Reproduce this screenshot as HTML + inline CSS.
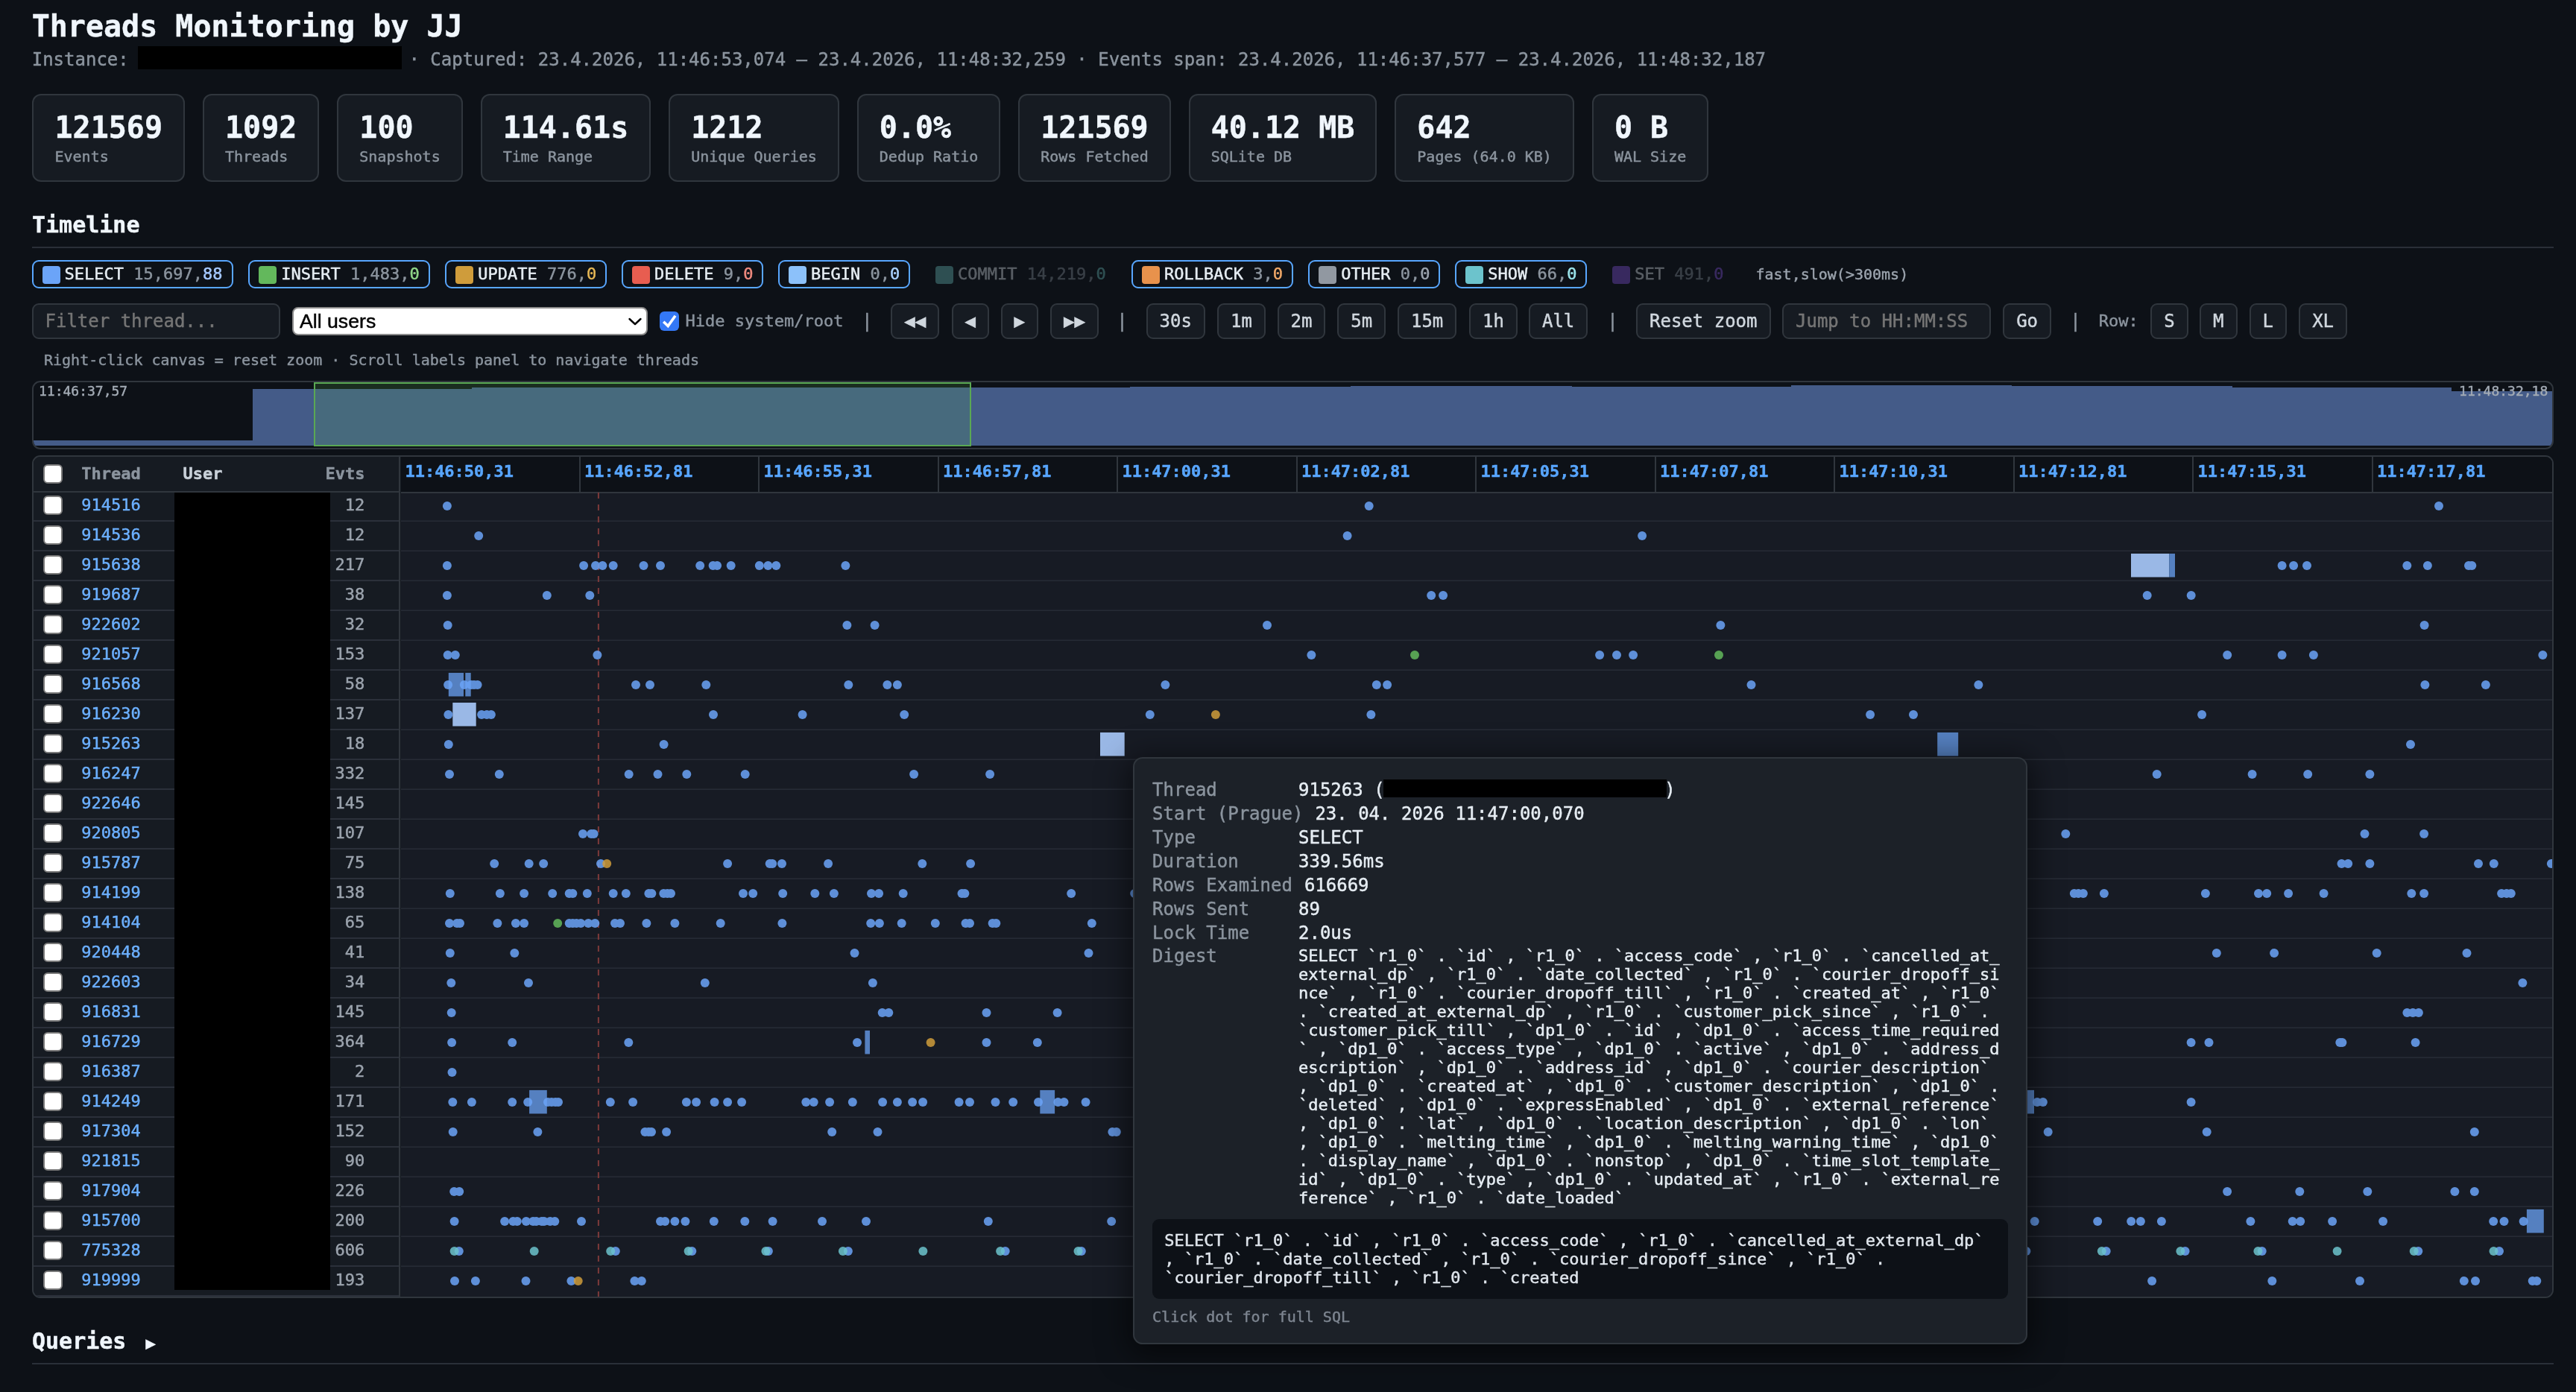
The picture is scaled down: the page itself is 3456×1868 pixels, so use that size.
<!DOCTYPE html>
<html lang="en"><head><meta charset="utf-8"><title>Threads Monitoring by JJ</title>
<style>
html,body{margin:0;padding:0}
body{-webkit-text-stroke:0.45px;width:3456px;height:1868px;background:#0d1117;overflow:hidden;position:relative;font-family:"DejaVu Sans Mono","Liberation Mono",monospace;color:#e6edf3}
.t{position:absolute;white-space:pre;margin:0}
.abs{position:absolute}
.card{position:absolute;top:126px;height:114px;background:#161b22;border:2px solid #30363d;border-radius:12px}
.pill{position:absolute;top:349px;height:34px;border:2px solid #58a6ff;border-radius:9px;box-sizing:content-box}
.pill.off{border-color:transparent;opacity:.35}
.pill i{position:absolute;left:12px;top:5.5px;width:24px;height:24px;border-radius:4px}
.pill span{position:absolute;left:42px;top:0;line-height:34px;font-size:22px;white-space:pre;color:#e6edf3}
.pill span b{font-weight:400;color:#8b949e}
.btn{position:absolute;top:407px;height:44px;border:2px solid #30363d;border-radius:9px;background:#161b22;color:#d0d7de;font-size:24px;line-height:44.8px;text-align:center;white-space:pre}
.inp{position:absolute;top:407px;height:44px;border:2px solid #30363d;border-radius:9px;background:#161b22;color:#757575;font-size:24px;line-height:44.8px;white-space:pre;padding-left:16px}
.sep{position:absolute;top:408px;height:47px;line-height:47px;font-size:24px;color:#8b949e;width:33px;text-align:center}
.cb{position:absolute;width:21.6px;height:21.6px;border:2px solid #7a7a7a;border-radius:6px;background:#fff}
.lrow{position:absolute;left:0;width:489px;height:38px;border-bottom:2px solid #2a2f39}
.tid{position:absolute;left:64px;top:0;line-height:42px;font-size:22px;color:#6cb0ff;white-space:pre}
.ev{position:absolute;right:47px;top:0;line-height:42px;font-size:22px;color:#9ba3ad;white-space:pre}
.tk{position:absolute;top:0;height:45px;width:2px;background:#30363d}
.tl{position:absolute;top:0;line-height:45px;font-size:22px;font-weight:700;color:#58a6ff;white-space:pre}
.tr{display:block;white-space:pre;height:32px;line-height:32px;font-size:24px;color:#e6edf3}
.tr b{font-weight:400;color:#8b949e;display:inline-block;min-width:180px;margin-right:16px}
#w{position:absolute;left:0;top:0;width:3456px;height:1868px;will-change:transform}
</style></head><body><div id="w">

<div class="t" style="left:42.7px;top:9.60px;font-size:40px;line-height:50px;color:#f0f6fc;font-weight:700;">Threads Monitoring by JJ</div>
<div class="t" style="left:42.7px;top:65.10px;font-size:24px;line-height:30px;color:#8b949e;">Instance: <span style="display:inline-block;width:346.8px"></span> · Captured: 23.4.2026, 11:46:53,074 – 23.4.2026, 11:48:32,259 · Events span: 23.4.2026, 11:46:37,577 – 23.4.2026, 11:48:32,187</div>
<div class="abs" style="left:185px;top:62px;width:354px;height:30.5px;background:#000"></div>
<div class="card" style="left:42.5px;width:201.5px"><div class="t" style="left:29px;top:18.3px;font-size:40px;line-height:50px;font-weight:700;color:#f0f6fc">121569</div><div class="t" style="left:29px;top:69px;font-size:20px;line-height:26px;color:#8b949e">Events</div></div>
<div class="card" style="left:272.0px;width:152.3px"><div class="t" style="left:28px;top:18.3px;font-size:40px;line-height:50px;font-weight:700;color:#f0f6fc">1092</div><div class="t" style="left:28px;top:69px;font-size:20px;line-height:26px;color:#8b949e">Threads</div></div>
<div class="card" style="left:452.3px;width:164.4px"><div class="t" style="left:28px;top:18.3px;font-size:40px;line-height:50px;font-weight:700;color:#f0f6fc">100</div><div class="t" style="left:28px;top:69px;font-size:20px;line-height:26px;color:#8b949e">Snapshots</div></div>
<div class="card" style="left:644.7px;width:224.6px"><div class="t" style="left:28px;top:18.3px;font-size:40px;line-height:50px;font-weight:700;color:#f0f6fc">114.61s</div><div class="t" style="left:28px;top:69px;font-size:20px;line-height:26px;color:#8b949e">Time Range</div></div>
<div class="card" style="left:897.2px;width:224.6px"><div class="t" style="left:28px;top:18.3px;font-size:40px;line-height:50px;font-weight:700;color:#f0f6fc">1212</div><div class="t" style="left:28px;top:69px;font-size:20px;line-height:26px;color:#8b949e">Unique Queries</div></div>
<div class="card" style="left:1149.8px;width:188.4px"><div class="t" style="left:28px;top:18.3px;font-size:40px;line-height:50px;font-weight:700;color:#f0f6fc">0.0%</div><div class="t" style="left:28px;top:69px;font-size:20px;line-height:26px;color:#8b949e">Dedup Ratio</div></div>
<div class="card" style="left:1366.2px;width:200.5px"><div class="t" style="left:28px;top:18.3px;font-size:40px;line-height:50px;font-weight:700;color:#f0f6fc">121569</div><div class="t" style="left:28px;top:69px;font-size:20px;line-height:26px;color:#8b949e">Rows Fetched</div></div>
<div class="card" style="left:1594.7px;width:248.6px"><div class="t" style="left:28px;top:18.3px;font-size:40px;line-height:50px;font-weight:700;color:#f0f6fc">40.12 MB</div><div class="t" style="left:28px;top:69px;font-size:20px;line-height:26px;color:#8b949e">SQLite DB</div></div>
<div class="card" style="left:1871.3px;width:236.6px"><div class="t" style="left:28px;top:18.3px;font-size:40px;line-height:50px;font-weight:700;color:#f0f6fc">642</div><div class="t" style="left:28px;top:69px;font-size:20px;line-height:26px;color:#8b949e">Pages (64.0 KB)</div></div>
<div class="card" style="left:2135.9px;width:152.3px"><div class="t" style="left:28px;top:18.3px;font-size:40px;line-height:50px;font-weight:700;color:#f0f6fc">0 B</div><div class="t" style="left:28px;top:69px;font-size:20px;line-height:26px;color:#8b949e">WAL Size</div></div>
<div class="t" style="left:43px;top:283.00px;font-size:30px;line-height:38px;color:#f0f6fc;font-weight:700;">Timeline</div>
<div class="abs" style="left:43px;top:331px;width:3383px;height:2px;background:#2a2f38"></div>
<div class="pill" style="left:42.5px;width:266.9px"><i style="background:#6ba4f8"></i><span>SELECT <b>15,697,</b><span style="position:static;color:#a5c8ff">88</span></span></div>
<div class="pill" style="left:333.2px;width:239.4px"><i style="background:#63b85c"></i><span>INSERT <b>1,483,</b><span style="position:static;color:#8fd688">0</span></span></div>
<div class="pill" style="left:597.3px;width:212.9px"><i style="background:#cf9c3b"></i><span>UPDATE <b>776,</b><span style="position:static;color:#e6b755">0</span></span></div>
<div class="pill" style="left:834px;width:186.4px"><i style="background:#e85d50"></i><span>DELETE <b>9,</b><span style="position:static;color:#f08a7f">0</span></span></div>
<div class="pill" style="left:1044px;width:173.2px"><i style="background:#8cc1fa"></i><span>BEGIN <b>0,</b><span style="position:static;color:#a9d1ff">0</span></span></div>
<div class="pill off" style="left:1241px;width:252.7px"><i style="background:#6ec2bf"></i><span>COMMIT <b>14,219,</b><span style="position:static;color:#6ec2bf">0</span></span></div>
<div class="pill" style="left:1518px;width:212.9px"><i style="background:#e8924c"></i><span>ROLLBACK <b>3,</b><span style="position:static;color:#f0a868">0</span></span></div>
<div class="pill" style="left:1755.3px;width:173.2px"><i style="background:#9198a1"></i><span>OTHER <b>0,</b><span style="position:static;color:#9ba3ad">0</span></span></div>
<div class="pill" style="left:1952.3px;width:173.2px"><i style="background:#6cc3cc"></i><span>SHOW <b>66,</b><span style="position:static;color:#9be3ea">0</span></span></div>
<div class="pill off" style="left:2149.3px;width:173.2px"><i style="background:#8957e5"></i><span>SET <b>491,</b><span style="position:static;color:#8957e5">0</span></span></div>
<div class="t" style="left:2355.5px;top:354.50px;font-size:20px;line-height:26px;color:#9ba3ad;">fast,slow(&gt;300ms)</div>
<div class="inp" style="left:42.5px;width:313px">Filter thread...</div>
<div class="abs" style="left:391.8px;top:411.8px;width:473px;height:34.4px;border:2px solid #8c8c8c;border-radius:8px;background:#fff"></div>
<div class="t" style="left:402px;top:413px;font-family:'Liberation Sans',Arial,sans-serif;font-size:26.67px;line-height:36px;color:#000">All users</div>
<svg class="abs" style="left:840px;top:420px" width="26" height="22" viewBox="0 0 26 22"><path d="M4.5 8 L12 15 L19.5 8" fill="none" stroke="#000" stroke-width="2.4" stroke-linecap="round" stroke-linejoin="round"/></svg>
<div class="abs" style="left:885px;top:418px;width:26px;height:26px;border-radius:6px;background:#3478f6"></div>
<svg class="abs" style="left:885px;top:418px" width="26" height="26" viewBox="0 0 26 26"><path d="M5.2 13.8 L11.2 19.6 L21 5.8" fill="none" stroke="#fff" stroke-width="3.6" stroke-linejoin="miter"/></svg>
<div class="t" style="left:919.5px;top:416.10px;font-size:22px;line-height:30px;color:#8b949e;">Hide system/root</div>
<div class="sep" style="left:1146.8px">|</div>
<div class="btn" style="left:1195.3px;width:60.9px">◀◀</div>
<div class="btn" style="left:1276.5px;width:46.5px">◀</div>
<div class="btn" style="left:1342.5px;width:46.5px">▶</div>
<div class="btn" style="left:1409px;width:60.9px">▶▶</div>
<div class="sep" style="left:1489.0px">|</div>
<div class="btn" style="left:1537.6px;width:75.3px">30s</div>
<div class="btn" style="left:1633px;width:60.9px">1m</div>
<div class="btn" style="left:1713.5px;width:60.9px">2m</div>
<div class="btn" style="left:1794.3px;width:60.9px">5m</div>
<div class="btn" style="left:1875px;width:75.3px">15m</div>
<div class="btn" style="left:1971px;width:60.9px">1h</div>
<div class="btn" style="left:2051px;width:75.3px">All</div>
<div class="sep" style="left:2147.1px">|</div>
<div class="btn" style="left:2195px;width:176.5px">Reset zoom</div>
<div class="inp" style="left:2391px;width:260px">Jump to HH:MM:SS</div>
<div class="btn" style="left:2687.2px;width:60.9px">Go</div>
<div class="sep" style="left:2767.9px">|</div>
<div class="t" style="left:2815.8px;top:416.10px;font-size:22px;line-height:30px;color:#8b949e;">Row:</div>
<div class="btn" style="left:2885.2px;width:46.5px">S</div>
<div class="btn" style="left:2951px;width:46.5px">M</div>
<div class="btn" style="left:3017.5px;width:46.5px">L</div>
<div class="btn" style="left:3084.2px;width:60.9px">XL</div>
<div class="t" style="left:59px;top:470.40px;font-size:20px;line-height:26px;color:#8b949e;">Right-click canvas = reset zoom · Scroll labels panel to navigate threads</div>
<div class="abs" style="left:42.5px;top:510.7px;width:3379.8px;height:88.3px;border:2px solid #30363d;border-radius:11px;overflow:hidden;background:#0d1117">
<div class="abs" style="left:0.0px;top:78.3px;width:294.5px;height:7.5px;background:#445b88"></div>
<div class="abs" style="left:294.5px;top:9.8px;width:294.0px;height:76.0px;background:#445b88"></div>
<div class="abs" style="left:588.5px;top:7.3px;width:294.0px;height:78.5px;background:#445b88"></div>
<div class="abs" style="left:882.5px;top:7.3px;width:294.0px;height:78.5px;background:#445b88"></div>
<div class="abs" style="left:1176.5px;top:7.3px;width:295.0px;height:78.5px;background:#445b88"></div>
<div class="abs" style="left:1471.5px;top:6.3px;width:296.0px;height:79.5px;background:#445b88"></div>
<div class="abs" style="left:1767.5px;top:5.6px;width:297.0px;height:80.2px;background:#445b88"></div>
<div class="abs" style="left:2064.5px;top:6.3px;width:294.0px;height:79.5px;background:#445b88"></div>
<div class="abs" style="left:2358.5px;top:4.3px;width:296.0px;height:81.5px;background:#445b88"></div>
<div class="abs" style="left:2654.5px;top:5.3px;width:296.0px;height:80.5px;background:#445b88"></div>
<div class="abs" style="left:2950.5px;top:7.3px;width:294.0px;height:78.5px;background:#445b88"></div>
<div class="abs" style="left:3244.5px;top:12.3px;width:136.0px;height:73.5px;background:#445b88"></div>
<div class="abs" style="left:376.3px;top:0.3px;width:878px;height:82.5px;border:2.5px solid #5aa854;background:rgba(90,180,80,.18)"></div>
<div class="t" style="left:7.5px;top:0.0px;font-size:18px;line-height:24px;color:#a3abb5">11:46:37,57</div>
<div class="t" style="right:6.0px;top:0.0px;font-size:18px;line-height:24px;color:#a3abb5">11:48:32,18</div>
</div>
<div class="abs" style="left:42.5px;top:611px;width:3379.8px;height:1127px;border:2px solid #30363d;border-radius:11px;overflow:hidden;background:#161b22">
<div class="abs" style="left:0;top:0;width:490.8px;height:1127px;background:#161b22;border-right:2px solid #30363d">
<div class="abs" style="left:0;top:0;width:490.8px;height:46.2px;border-bottom:2px solid #30363d"></div>
<div class="cb" style="left:13.7px;top:10.4px"></div>
<div class="t" style="left:64.7px;top:7.60px;font-size:22px;line-height:30px;color:#8b949e;font-weight:700;">Thread</div>
<div class="t" style="left:200.9px;top:7.60px;font-size:22px;line-height:30px;color:#c9d1d9;font-weight:700;">User</div>
<div class="t" style="left:392.1px;top:7.60px;font-size:22px;line-height:30px;color:#8b949e;font-weight:700;">Evts</div>
<div class="abs" style="left:0;top:84.5px;width:490.8px;height:2px;background:#2b303a"></div>
<div class="cb" style="left:13.7px;top:52.2px"></div>
<div class="t" style="left:64.8px;top:50.30px;font-size:22px;line-height:30px;color:#6cb0ff;">914516</div>
<div class="t" style="right:45.99999999999994px;top:50.30px;font-size:22px;line-height:30px;color:#9ba3ad;">12</div>
<div class="abs" style="left:0;top:124.5px;width:490.8px;height:2px;background:#2b303a"></div>
<div class="cb" style="left:13.7px;top:92.2px"></div>
<div class="t" style="left:64.8px;top:90.30px;font-size:22px;line-height:30px;color:#6cb0ff;">914536</div>
<div class="t" style="right:45.99999999999994px;top:90.30px;font-size:22px;line-height:30px;color:#9ba3ad;">12</div>
<div class="abs" style="left:0;top:164.5px;width:490.8px;height:2px;background:#2b303a"></div>
<div class="cb" style="left:13.7px;top:132.2px"></div>
<div class="t" style="left:64.8px;top:130.30px;font-size:22px;line-height:30px;color:#6cb0ff;">915638</div>
<div class="t" style="right:45.99999999999994px;top:130.30px;font-size:22px;line-height:30px;color:#9ba3ad;">217</div>
<div class="abs" style="left:0;top:204.5px;width:490.8px;height:2px;background:#2b303a"></div>
<div class="cb" style="left:13.7px;top:172.2px"></div>
<div class="t" style="left:64.8px;top:170.30px;font-size:22px;line-height:30px;color:#6cb0ff;">919687</div>
<div class="t" style="right:45.99999999999994px;top:170.30px;font-size:22px;line-height:30px;color:#9ba3ad;">38</div>
<div class="abs" style="left:0;top:244.5px;width:490.8px;height:2px;background:#2b303a"></div>
<div class="cb" style="left:13.7px;top:212.2px"></div>
<div class="t" style="left:64.8px;top:210.30px;font-size:22px;line-height:30px;color:#6cb0ff;">922602</div>
<div class="t" style="right:45.99999999999994px;top:210.30px;font-size:22px;line-height:30px;color:#9ba3ad;">32</div>
<div class="abs" style="left:0;top:284.5px;width:490.8px;height:2px;background:#2b303a"></div>
<div class="cb" style="left:13.7px;top:252.2px"></div>
<div class="t" style="left:64.8px;top:250.30px;font-size:22px;line-height:30px;color:#6cb0ff;">921057</div>
<div class="t" style="right:45.99999999999994px;top:250.30px;font-size:22px;line-height:30px;color:#9ba3ad;">153</div>
<div class="abs" style="left:0;top:324.5px;width:490.8px;height:2px;background:#2b303a"></div>
<div class="cb" style="left:13.7px;top:292.2px"></div>
<div class="t" style="left:64.8px;top:290.30px;font-size:22px;line-height:30px;color:#6cb0ff;">916568</div>
<div class="t" style="right:45.99999999999994px;top:290.30px;font-size:22px;line-height:30px;color:#9ba3ad;">58</div>
<div class="abs" style="left:0;top:364.5px;width:490.8px;height:2px;background:#2b303a"></div>
<div class="cb" style="left:13.7px;top:332.2px"></div>
<div class="t" style="left:64.8px;top:330.30px;font-size:22px;line-height:30px;color:#6cb0ff;">916230</div>
<div class="t" style="right:45.99999999999994px;top:330.30px;font-size:22px;line-height:30px;color:#9ba3ad;">137</div>
<div class="abs" style="left:0;top:404.5px;width:490.8px;height:2px;background:#2b303a"></div>
<div class="cb" style="left:13.7px;top:372.2px"></div>
<div class="t" style="left:64.8px;top:370.30px;font-size:22px;line-height:30px;color:#6cb0ff;">915263</div>
<div class="t" style="right:45.99999999999994px;top:370.30px;font-size:22px;line-height:30px;color:#9ba3ad;">18</div>
<div class="abs" style="left:0;top:444.5px;width:490.8px;height:2px;background:#2b303a"></div>
<div class="cb" style="left:13.7px;top:412.2px"></div>
<div class="t" style="left:64.8px;top:410.30px;font-size:22px;line-height:30px;color:#6cb0ff;">916247</div>
<div class="t" style="right:45.99999999999994px;top:410.30px;font-size:22px;line-height:30px;color:#9ba3ad;">332</div>
<div class="abs" style="left:0;top:484.5px;width:490.8px;height:2px;background:#2b303a"></div>
<div class="cb" style="left:13.7px;top:452.2px"></div>
<div class="t" style="left:64.8px;top:450.30px;font-size:22px;line-height:30px;color:#6cb0ff;">922646</div>
<div class="t" style="right:45.99999999999994px;top:450.30px;font-size:22px;line-height:30px;color:#9ba3ad;">145</div>
<div class="abs" style="left:0;top:524.5px;width:490.8px;height:2px;background:#2b303a"></div>
<div class="cb" style="left:13.7px;top:492.2px"></div>
<div class="t" style="left:64.8px;top:490.30px;font-size:22px;line-height:30px;color:#6cb0ff;">920805</div>
<div class="t" style="right:45.99999999999994px;top:490.30px;font-size:22px;line-height:30px;color:#9ba3ad;">107</div>
<div class="abs" style="left:0;top:564.5px;width:490.8px;height:2px;background:#2b303a"></div>
<div class="cb" style="left:13.7px;top:532.2px"></div>
<div class="t" style="left:64.8px;top:530.30px;font-size:22px;line-height:30px;color:#6cb0ff;">915787</div>
<div class="t" style="right:45.99999999999994px;top:530.30px;font-size:22px;line-height:30px;color:#9ba3ad;">75</div>
<div class="abs" style="left:0;top:604.5px;width:490.8px;height:2px;background:#2b303a"></div>
<div class="cb" style="left:13.7px;top:572.2px"></div>
<div class="t" style="left:64.8px;top:570.30px;font-size:22px;line-height:30px;color:#6cb0ff;">914199</div>
<div class="t" style="right:45.99999999999994px;top:570.30px;font-size:22px;line-height:30px;color:#9ba3ad;">138</div>
<div class="abs" style="left:0;top:644.5px;width:490.8px;height:2px;background:#2b303a"></div>
<div class="cb" style="left:13.7px;top:612.2px"></div>
<div class="t" style="left:64.8px;top:610.30px;font-size:22px;line-height:30px;color:#6cb0ff;">914104</div>
<div class="t" style="right:45.99999999999994px;top:610.30px;font-size:22px;line-height:30px;color:#9ba3ad;">65</div>
<div class="abs" style="left:0;top:684.5px;width:490.8px;height:2px;background:#2b303a"></div>
<div class="cb" style="left:13.7px;top:652.2px"></div>
<div class="t" style="left:64.8px;top:650.30px;font-size:22px;line-height:30px;color:#6cb0ff;">920448</div>
<div class="t" style="right:45.99999999999994px;top:650.30px;font-size:22px;line-height:30px;color:#9ba3ad;">41</div>
<div class="abs" style="left:0;top:724.5px;width:490.8px;height:2px;background:#2b303a"></div>
<div class="cb" style="left:13.7px;top:692.2px"></div>
<div class="t" style="left:64.8px;top:690.30px;font-size:22px;line-height:30px;color:#6cb0ff;">922603</div>
<div class="t" style="right:45.99999999999994px;top:690.30px;font-size:22px;line-height:30px;color:#9ba3ad;">34</div>
<div class="abs" style="left:0;top:764.5px;width:490.8px;height:2px;background:#2b303a"></div>
<div class="cb" style="left:13.7px;top:732.2px"></div>
<div class="t" style="left:64.8px;top:730.30px;font-size:22px;line-height:30px;color:#6cb0ff;">916831</div>
<div class="t" style="right:45.99999999999994px;top:730.30px;font-size:22px;line-height:30px;color:#9ba3ad;">145</div>
<div class="abs" style="left:0;top:804.5px;width:490.8px;height:2px;background:#2b303a"></div>
<div class="cb" style="left:13.7px;top:772.2px"></div>
<div class="t" style="left:64.8px;top:770.30px;font-size:22px;line-height:30px;color:#6cb0ff;">916729</div>
<div class="t" style="right:45.99999999999994px;top:770.30px;font-size:22px;line-height:30px;color:#9ba3ad;">364</div>
<div class="abs" style="left:0;top:844.5px;width:490.8px;height:2px;background:#2b303a"></div>
<div class="cb" style="left:13.7px;top:812.2px"></div>
<div class="t" style="left:64.8px;top:810.30px;font-size:22px;line-height:30px;color:#6cb0ff;">916387</div>
<div class="t" style="right:45.99999999999994px;top:810.30px;font-size:22px;line-height:30px;color:#9ba3ad;">2</div>
<div class="abs" style="left:0;top:884.5px;width:490.8px;height:2px;background:#2b303a"></div>
<div class="cb" style="left:13.7px;top:852.2px"></div>
<div class="t" style="left:64.8px;top:850.30px;font-size:22px;line-height:30px;color:#6cb0ff;">914249</div>
<div class="t" style="right:45.99999999999994px;top:850.30px;font-size:22px;line-height:30px;color:#9ba3ad;">171</div>
<div class="abs" style="left:0;top:924.5px;width:490.8px;height:2px;background:#2b303a"></div>
<div class="cb" style="left:13.7px;top:892.2px"></div>
<div class="t" style="left:64.8px;top:890.30px;font-size:22px;line-height:30px;color:#6cb0ff;">917304</div>
<div class="t" style="right:45.99999999999994px;top:890.30px;font-size:22px;line-height:30px;color:#9ba3ad;">152</div>
<div class="abs" style="left:0;top:964.5px;width:490.8px;height:2px;background:#2b303a"></div>
<div class="cb" style="left:13.7px;top:932.2px"></div>
<div class="t" style="left:64.8px;top:930.30px;font-size:22px;line-height:30px;color:#6cb0ff;">921815</div>
<div class="t" style="right:45.99999999999994px;top:930.30px;font-size:22px;line-height:30px;color:#9ba3ad;">90</div>
<div class="abs" style="left:0;top:1004.5px;width:490.8px;height:2px;background:#2b303a"></div>
<div class="cb" style="left:13.7px;top:972.2px"></div>
<div class="t" style="left:64.8px;top:970.30px;font-size:22px;line-height:30px;color:#6cb0ff;">917904</div>
<div class="t" style="right:45.99999999999994px;top:970.30px;font-size:22px;line-height:30px;color:#9ba3ad;">226</div>
<div class="abs" style="left:0;top:1044.5px;width:490.8px;height:2px;background:#2b303a"></div>
<div class="cb" style="left:13.7px;top:1012.2px"></div>
<div class="t" style="left:64.8px;top:1010.30px;font-size:22px;line-height:30px;color:#6cb0ff;">915700</div>
<div class="t" style="right:45.99999999999994px;top:1010.30px;font-size:22px;line-height:30px;color:#9ba3ad;">200</div>
<div class="abs" style="left:0;top:1084.5px;width:490.8px;height:2px;background:#2b303a"></div>
<div class="cb" style="left:13.7px;top:1052.2px"></div>
<div class="t" style="left:64.8px;top:1050.30px;font-size:22px;line-height:30px;color:#6cb0ff;">775328</div>
<div class="t" style="right:45.99999999999994px;top:1050.30px;font-size:22px;line-height:30px;color:#9ba3ad;">606</div>
<div class="abs" style="left:0;top:1124.5px;width:490.8px;height:2px;background:#2b303a"></div>
<div class="cb" style="left:13.7px;top:1092.2px"></div>
<div class="t" style="left:64.8px;top:1090.30px;font-size:22px;line-height:30px;color:#6cb0ff;">919999</div>
<div class="t" style="right:45.99999999999994px;top:1090.30px;font-size:22px;line-height:30px;color:#9ba3ad;">193</div>
<div class="abs" style="left:189.2px;top:48px;width:209.5px;height:1070px;background:#000"></div>
</div>
<div class="abs" style="left:493.5px;top:0;width:2886.3px;height:1127px;background:#171b24;overflow:hidden">
<div class="abs" style="left:0;top:0;width:2886.3px;height:47px;background:#0d1117;border-bottom:2px solid #30363d"></div>
<div class="t" style="left:5.4px;top:4.50px;font-size:22px;line-height:30px;font-weight:700;color:#58a6ff">11:46:50,31</div>
<div class="abs" style="left:238.7px;top:0;width:2px;height:47px;background:#30363d"></div>
<div class="t" style="left:245.9px;top:4.50px;font-size:22px;line-height:30px;font-weight:700;color:#58a6ff">11:46:52,81</div>
<div class="abs" style="left:479.2px;top:0;width:2px;height:47px;background:#30363d"></div>
<div class="t" style="left:486.4px;top:4.50px;font-size:22px;line-height:30px;font-weight:700;color:#58a6ff">11:46:55,31</div>
<div class="abs" style="left:719.7px;top:0;width:2px;height:47px;background:#30363d"></div>
<div class="t" style="left:726.9px;top:4.50px;font-size:22px;line-height:30px;font-weight:700;color:#58a6ff">11:46:57,81</div>
<div class="abs" style="left:960.2px;top:0;width:2px;height:47px;background:#30363d"></div>
<div class="t" style="left:967.4px;top:4.50px;font-size:22px;line-height:30px;font-weight:700;color:#58a6ff">11:47:00,31</div>
<div class="abs" style="left:1200.7px;top:0;width:2px;height:47px;background:#30363d"></div>
<div class="t" style="left:1207.9px;top:4.50px;font-size:22px;line-height:30px;font-weight:700;color:#58a6ff">11:47:02,81</div>
<div class="abs" style="left:1441.2px;top:0;width:2px;height:47px;background:#30363d"></div>
<div class="t" style="left:1448.4px;top:4.50px;font-size:22px;line-height:30px;font-weight:700;color:#58a6ff">11:47:05,31</div>
<div class="abs" style="left:1681.7px;top:0;width:2px;height:47px;background:#30363d"></div>
<div class="t" style="left:1688.9px;top:4.50px;font-size:22px;line-height:30px;font-weight:700;color:#58a6ff">11:47:07,81</div>
<div class="abs" style="left:1922.2px;top:0;width:2px;height:47px;background:#30363d"></div>
<div class="t" style="left:1929.4px;top:4.50px;font-size:22px;line-height:30px;font-weight:700;color:#58a6ff">11:47:10,31</div>
<div class="abs" style="left:2162.7px;top:0;width:2px;height:47px;background:#30363d"></div>
<div class="t" style="left:2169.9px;top:4.50px;font-size:22px;line-height:30px;font-weight:700;color:#58a6ff">11:47:12,81</div>
<div class="abs" style="left:2403.2px;top:0;width:2px;height:47px;background:#30363d"></div>
<div class="t" style="left:2410.4px;top:4.50px;font-size:22px;line-height:30px;font-weight:700;color:#58a6ff">11:47:15,31</div>
<div class="abs" style="left:2643.7px;top:0;width:2px;height:47px;background:#30363d"></div>
<div class="t" style="left:2650.9px;top:4.50px;font-size:22px;line-height:30px;font-weight:700;color:#58a6ff">11:47:17,81</div>
<svg class="abs" style="left:0;top:0" width="2886.3" height="1127" viewBox="538 613 2886.3 1127"><rect x="538" y="698.4" width="2886.3" height="1.6" fill="#262b35"/><rect x="538" y="738.4" width="2886.3" height="1.6" fill="#262b35"/><rect x="538" y="778.4" width="2886.3" height="1.6" fill="#262b35"/><rect x="538" y="818.4" width="2886.3" height="1.6" fill="#262b35"/><rect x="538" y="858.4" width="2886.3" height="1.6" fill="#262b35"/><rect x="538" y="898.4" width="2886.3" height="1.6" fill="#262b35"/><rect x="538" y="938.4" width="2886.3" height="1.6" fill="#262b35"/><rect x="538" y="978.4" width="2886.3" height="1.6" fill="#262b35"/><rect x="538" y="1018.4" width="2886.3" height="1.6" fill="#262b35"/><rect x="538" y="1058.4" width="2886.3" height="1.6" fill="#262b35"/><rect x="538" y="1098.4" width="2886.3" height="1.6" fill="#262b35"/><rect x="538" y="1138.4" width="2886.3" height="1.6" fill="#262b35"/><rect x="538" y="1178.4" width="2886.3" height="1.6" fill="#262b35"/><rect x="538" y="1218.4" width="2886.3" height="1.6" fill="#262b35"/><rect x="538" y="1258.4" width="2886.3" height="1.6" fill="#262b35"/><rect x="538" y="1298.4" width="2886.3" height="1.6" fill="#262b35"/><rect x="538" y="1338.4" width="2886.3" height="1.6" fill="#262b35"/><rect x="538" y="1378.4" width="2886.3" height="1.6" fill="#262b35"/><rect x="538" y="1418.4" width="2886.3" height="1.6" fill="#262b35"/><rect x="538" y="1458.4" width="2886.3" height="1.6" fill="#262b35"/><rect x="538" y="1498.4" width="2886.3" height="1.6" fill="#262b35"/><rect x="538" y="1538.4" width="2886.3" height="1.6" fill="#262b35"/><rect x="538" y="1578.4" width="2886.3" height="1.6" fill="#262b35"/><rect x="538" y="1618.4" width="2886.3" height="1.6" fill="#262b35"/><rect x="538" y="1658.4" width="2886.3" height="1.6" fill="#262b35"/><rect x="538" y="1698.4" width="2886.3" height="1.6" fill="#262b35"/><line x1="802.9" y1="661" x2="802.9" y2="1740" stroke="#7d3a3a" stroke-width="2" stroke-dasharray="8 8"/><rect x="2859.0" y="742.9" width="51.2" height="31.6" fill="#9ab8e6"/><rect x="2910.2" y="742.9" width="7.8" height="31.6" fill="#5580c0"/><rect x="601.8" y="902.9" width="20.2" height="31.6" fill="#5580c0"/><rect x="624.3" y="902.9" width="7.4" height="31.6" fill="#5580c0"/><rect x="607.3" y="942.9" width="31.4" height="31.6" fill="#9ab8e6"/><rect x="1476.0" y="982.9" width="32.7" height="31.6" fill="#9ab8e6"/><rect x="2599.2" y="982.9" width="28.0" height="31.6" fill="#5580c0"/><rect x="1160.4" y="1382.9" width="6.6" height="31.6" fill="#5580c0"/><rect x="710.1" y="1462.9" width="23.7" height="31.6" fill="#5580c0"/><rect x="1395.3" y="1462.9" width="19.8" height="31.6" fill="#5580c0"/><rect x="2708.0" y="1462.9" width="21.0" height="31.6" fill="#5580c0"/><rect x="3389.9" y="1622.9" width="22.9" height="31.6" fill="#5580c0"/><g fill="#6ba4f8" opacity=".85"><circle cx="599.9" cy="678.9" r="6"/><circle cx="1836.7" cy="678.9" r="6"/><circle cx="3272.0" cy="678.9" r="6"/><circle cx="642.2" cy="718.9" r="6"/><circle cx="1807.6" cy="718.9" r="6"/><circle cx="2203.1" cy="718.9" r="6"/><circle cx="599.9" cy="758.9" r="6"/><circle cx="783.1" cy="758.9" r="6"/><circle cx="799.0" cy="758.9" r="6"/><circle cx="808.4" cy="758.9" r="6"/><circle cx="822.7" cy="758.9" r="6"/><circle cx="863.5" cy="758.9" r="6"/><circle cx="886.0" cy="758.9" r="6"/><circle cx="939.2" cy="758.9" r="6"/><circle cx="956.6" cy="758.9" r="6"/><circle cx="962.1" cy="758.9" r="6"/><circle cx="980.7" cy="758.9" r="6"/><circle cx="1018.8" cy="758.9" r="6"/><circle cx="1030.4" cy="758.9" r="6"/><circle cx="1041.3" cy="758.9" r="6"/><circle cx="1134.4" cy="758.9" r="6"/><circle cx="3061.6" cy="758.9" r="6"/><circle cx="3077.1" cy="758.9" r="6"/><circle cx="3095.0" cy="758.9" r="6"/><circle cx="3229.3" cy="758.9" r="6"/><circle cx="3256.9" cy="758.9" r="6"/><circle cx="3312.0" cy="758.9" r="6"/><circle cx="3316.3" cy="758.9" r="6"/><circle cx="599.9" cy="798.9" r="6"/><circle cx="733.8" cy="798.9" r="6"/><circle cx="791.3" cy="798.9" r="6"/><circle cx="1920.2" cy="798.9" r="6"/><circle cx="1936.1" cy="798.9" r="6"/><circle cx="2880.7" cy="798.9" r="6"/><circle cx="2939.7" cy="798.9" r="6"/><circle cx="600.7" cy="838.9" r="6"/><circle cx="1136.4" cy="838.9" r="6"/><circle cx="1173.6" cy="838.9" r="6"/><circle cx="1700.0" cy="838.9" r="6"/><circle cx="2308.4" cy="838.9" r="6"/><circle cx="3252.6" cy="838.9" r="6"/><circle cx="600.7" cy="878.9" r="6"/><circle cx="610.8" cy="878.9" r="6"/><circle cx="801.4" cy="878.9" r="6"/><circle cx="1759.4" cy="878.9" r="6"/><circle cx="2146.1" cy="878.9" r="6"/><circle cx="2169.0" cy="878.9" r="6"/><circle cx="2191.1" cy="878.9" r="6"/><circle cx="2988.2" cy="878.9" r="6"/><circle cx="3061.6" cy="878.9" r="6"/><circle cx="3103.9" cy="878.9" r="6"/><circle cx="3411.4" cy="878.9" r="6"/><circle cx="601.1" cy="918.9" r="6"/><circle cx="622.8" cy="918.9" r="6"/><circle cx="632.1" cy="918.9" r="6"/><circle cx="636.0" cy="918.9" r="6"/><circle cx="640.6" cy="918.9" r="6"/><circle cx="853.0" cy="918.9" r="6"/><circle cx="872.0" cy="918.9" r="6"/><circle cx="947.3" cy="918.9" r="6"/><circle cx="1138.3" cy="918.9" r="6"/><circle cx="1190.4" cy="918.9" r="6"/><circle cx="1203.9" cy="918.9" r="6"/><circle cx="1563.4" cy="918.9" r="6"/><circle cx="1846.8" cy="918.9" r="6"/><circle cx="1861.1" cy="918.9" r="6"/><circle cx="2349.5" cy="918.9" r="6"/><circle cx="2654.4" cy="918.9" r="6"/><circle cx="3253.4" cy="918.9" r="6"/><circle cx="3334.9" cy="918.9" r="6"/><circle cx="601.4" cy="958.9" r="6"/><circle cx="646.1" cy="958.9" r="6"/><circle cx="653.1" cy="958.9" r="6"/><circle cx="658.9" cy="958.9" r="6"/><circle cx="957.0" cy="958.9" r="6"/><circle cx="1076.6" cy="958.9" r="6"/><circle cx="1213.2" cy="958.9" r="6"/><circle cx="1542.8" cy="958.9" r="6"/><circle cx="1839.4" cy="958.9" r="6"/><circle cx="2509.1" cy="958.9" r="6"/><circle cx="2567.0" cy="958.9" r="6"/><circle cx="2954.1" cy="958.9" r="6"/><circle cx="601.8" cy="998.9" r="6"/><circle cx="890.6" cy="998.9" r="6"/><circle cx="3234.0" cy="998.9" r="6"/><circle cx="603.0" cy="1038.9" r="6"/><circle cx="669.8" cy="1038.9" r="6"/><circle cx="843.7" cy="1038.9" r="6"/><circle cx="882.5" cy="1038.9" r="6"/><circle cx="921.3" cy="1038.9" r="6"/><circle cx="999.7" cy="1038.9" r="6"/><circle cx="1226.1" cy="1038.9" r="6"/><circle cx="1328.1" cy="1038.9" r="6"/><circle cx="2893.7" cy="1038.9" r="6"/><circle cx="3021.6" cy="1038.9" r="6"/><circle cx="3096.2" cy="1038.9" r="6"/><circle cx="3179.4" cy="1038.9" r="6"/><circle cx="782.0" cy="1118.9" r="6"/><circle cx="793.2" cy="1118.9" r="6"/><circle cx="796.7" cy="1118.9" r="6"/><circle cx="2771.3" cy="1118.9" r="6"/><circle cx="3172.5" cy="1118.9" r="6"/><circle cx="3252.1" cy="1118.9" r="6"/><circle cx="663.2" cy="1158.9" r="6"/><circle cx="709.7" cy="1158.9" r="6"/><circle cx="729.2" cy="1158.9" r="6"/><circle cx="806.0" cy="1158.9" r="6"/><circle cx="976.1" cy="1158.9" r="6"/><circle cx="1032.7" cy="1158.9" r="6"/><circle cx="1036.2" cy="1158.9" r="6"/><circle cx="1049.0" cy="1158.9" r="6"/><circle cx="1111.1" cy="1158.9" r="6"/><circle cx="1237.3" cy="1158.9" r="6"/><circle cx="1302.1" cy="1158.9" r="6"/><circle cx="3141.5" cy="1158.9" r="6"/><circle cx="3150.2" cy="1158.9" r="6"/><circle cx="3179.4" cy="1158.9" r="6"/><circle cx="3325.0" cy="1158.9" r="6"/><circle cx="3345.8" cy="1158.9" r="6"/><circle cx="3422.9" cy="1158.9" r="6"/><circle cx="603.8" cy="1198.9" r="6"/><circle cx="670.9" cy="1198.9" r="6"/><circle cx="703.1" cy="1198.9" r="6"/><circle cx="741.2" cy="1198.9" r="6"/><circle cx="763.7" cy="1198.9" r="6"/><circle cx="768.4" cy="1198.9" r="6"/><circle cx="787.8" cy="1198.9" r="6"/><circle cx="822.7" cy="1198.9" r="6"/><circle cx="839.8" cy="1198.9" r="6"/><circle cx="870.4" cy="1198.9" r="6"/><circle cx="874.4" cy="1198.9" r="6"/><circle cx="890.3" cy="1198.9" r="6"/><circle cx="895.3" cy="1198.9" r="6"/><circle cx="900.0" cy="1198.9" r="6"/><circle cx="997.0" cy="1198.9" r="6"/><circle cx="1010.2" cy="1198.9" r="6"/><circle cx="1050.2" cy="1198.9" r="6"/><circle cx="1093.3" cy="1198.9" r="6"/><circle cx="1118.9" cy="1198.9" r="6"/><circle cx="1169.0" cy="1198.9" r="6"/><circle cx="1179.1" cy="1198.9" r="6"/><circle cx="1211.7" cy="1198.9" r="6"/><circle cx="1290.5" cy="1198.9" r="6"/><circle cx="1294.4" cy="1198.9" r="6"/><circle cx="1437.2" cy="1198.9" r="6"/><circle cx="1522.2" cy="1198.9" r="6"/><circle cx="2782.8" cy="1198.9" r="6"/><circle cx="2788.4" cy="1198.9" r="6"/><circle cx="2794.9" cy="1198.9" r="6"/><circle cx="2822.9" cy="1198.9" r="6"/><circle cx="2958.9" cy="1198.9" r="6"/><circle cx="3030.0" cy="1198.9" r="6"/><circle cx="3041.2" cy="1198.9" r="6"/><circle cx="3070.1" cy="1198.9" r="6"/><circle cx="3117.6" cy="1198.9" r="6"/><circle cx="3235.3" cy="1198.9" r="6"/><circle cx="3252.1" cy="1198.9" r="6"/><circle cx="3356.1" cy="1198.9" r="6"/><circle cx="3362.9" cy="1198.9" r="6"/><circle cx="3368.8" cy="1198.9" r="6"/><circle cx="603.0" cy="1238.9" r="6"/><circle cx="613.1" cy="1238.9" r="6"/><circle cx="617.0" cy="1238.9" r="6"/><circle cx="667.4" cy="1238.9" r="6"/><circle cx="691.9" cy="1238.9" r="6"/><circle cx="703.1" cy="1238.9" r="6"/><circle cx="763.7" cy="1238.9" r="6"/><circle cx="768.4" cy="1238.9" r="6"/><circle cx="773.4" cy="1238.9" r="6"/><circle cx="779.2" cy="1238.9" r="6"/><circle cx="789.3" cy="1238.9" r="6"/><circle cx="798.3" cy="1238.9" r="6"/><circle cx="825.0" cy="1238.9" r="6"/><circle cx="832.0" cy="1238.9" r="6"/><circle cx="867.4" cy="1238.9" r="6"/><circle cx="905.4" cy="1238.9" r="6"/><circle cx="966.7" cy="1238.9" r="6"/><circle cx="1049.4" cy="1238.9" r="6"/><circle cx="1168.2" cy="1238.9" r="6"/><circle cx="1179.9" cy="1238.9" r="6"/><circle cx="1209.7" cy="1238.9" r="6"/><circle cx="1254.8" cy="1238.9" r="6"/><circle cx="1295.5" cy="1238.9" r="6"/><circle cx="1301.0" cy="1238.9" r="6"/><circle cx="1331.6" cy="1238.9" r="6"/><circle cx="1336.3" cy="1238.9" r="6"/><circle cx="1464.8" cy="1238.9" r="6"/><circle cx="603.8" cy="1278.9" r="6"/><circle cx="690.3" cy="1278.9" r="6"/><circle cx="1146.5" cy="1278.9" r="6"/><circle cx="1460.5" cy="1278.9" r="6"/><circle cx="2973.8" cy="1278.9" r="6"/><circle cx="3051.1" cy="1278.9" r="6"/><circle cx="3188.7" cy="1278.9" r="6"/><circle cx="3309.5" cy="1278.9" r="6"/><circle cx="605.3" cy="1318.9" r="6"/><circle cx="709.0" cy="1318.9" r="6"/><circle cx="945.8" cy="1318.9" r="6"/><circle cx="1170.9" cy="1318.9" r="6"/><circle cx="3384.4" cy="1318.9" r="6"/><circle cx="605.7" cy="1358.9" r="6"/><circle cx="1183.7" cy="1358.9" r="6"/><circle cx="1192.3" cy="1358.9" r="6"/><circle cx="1323.5" cy="1358.9" r="6"/><circle cx="1418.6" cy="1358.9" r="6"/><circle cx="3229.4" cy="1358.9" r="6"/><circle cx="3237.1" cy="1358.9" r="6"/><circle cx="3244.9" cy="1358.9" r="6"/><circle cx="606.1" cy="1398.9" r="6"/><circle cx="687.2" cy="1398.9" r="6"/><circle cx="843.3" cy="1398.9" r="6"/><circle cx="1150.0" cy="1398.9" r="6"/><circle cx="1323.5" cy="1398.9" r="6"/><circle cx="1391.8" cy="1398.9" r="6"/><circle cx="2939.6" cy="1398.9" r="6"/><circle cx="2963.5" cy="1398.9" r="6"/><circle cx="3139.3" cy="1398.9" r="6"/><circle cx="3142.4" cy="1398.9" r="6"/><circle cx="3240.6" cy="1398.9" r="6"/><circle cx="606.5" cy="1438.9" r="6"/><circle cx="607.3" cy="1478.9" r="6"/><circle cx="632.9" cy="1478.9" r="6"/><circle cx="687.2" cy="1478.9" r="6"/><circle cx="708.2" cy="1478.9" r="6"/><circle cx="735.0" cy="1478.9" r="6"/><circle cx="740.0" cy="1478.9" r="6"/><circle cx="745.1" cy="1478.9" r="6"/><circle cx="749.0" cy="1478.9" r="6"/><circle cx="818.8" cy="1478.9" r="6"/><circle cx="849.1" cy="1478.9" r="6"/><circle cx="920.9" cy="1478.9" r="6"/><circle cx="934.1" cy="1478.9" r="6"/><circle cx="958.6" cy="1478.9" r="6"/><circle cx="976.1" cy="1478.9" r="6"/><circle cx="995.1" cy="1478.9" r="6"/><circle cx="1081.3" cy="1478.9" r="6"/><circle cx="1091.7" cy="1478.9" r="6"/><circle cx="1113.1" cy="1478.9" r="6"/><circle cx="1143.8" cy="1478.9" r="6"/><circle cx="1184.1" cy="1478.9" r="6"/><circle cx="1203.9" cy="1478.9" r="6"/><circle cx="1224.1" cy="1478.9" r="6"/><circle cx="1238.1" cy="1478.9" r="6"/><circle cx="1286.6" cy="1478.9" r="6"/><circle cx="1301.0" cy="1478.9" r="6"/><circle cx="1335.5" cy="1478.9" r="6"/><circle cx="1359.2" cy="1478.9" r="6"/><circle cx="1393.0" cy="1478.9" r="6"/><circle cx="1419.4" cy="1478.9" r="6"/><circle cx="1427.5" cy="1478.9" r="6"/><circle cx="1456.6" cy="1478.9" r="6"/><circle cx="2733.1" cy="1478.9" r="6"/><circle cx="2740.9" cy="1478.9" r="6"/><circle cx="2939.6" cy="1478.9" r="6"/><circle cx="607.7" cy="1518.9" r="6"/><circle cx="721.4" cy="1518.9" r="6"/><circle cx="865.4" cy="1518.9" r="6"/><circle cx="870.1" cy="1518.9" r="6"/><circle cx="874.0" cy="1518.9" r="6"/><circle cx="894.1" cy="1518.9" r="6"/><circle cx="1116.2" cy="1518.9" r="6"/><circle cx="1177.5" cy="1518.9" r="6"/><circle cx="1492.4" cy="1518.9" r="6"/><circle cx="1497.8" cy="1518.9" r="6"/><circle cx="2747.7" cy="1518.9" r="6"/><circle cx="2960.7" cy="1518.9" r="6"/><circle cx="3319.8" cy="1518.9" r="6"/><circle cx="609.2" cy="1598.9" r="6"/><circle cx="616.2" cy="1598.9" r="6"/><circle cx="2988.1" cy="1598.9" r="6"/><circle cx="3085.3" cy="1598.9" r="6"/><circle cx="3176.3" cy="1598.9" r="6"/><circle cx="3293.4" cy="1598.9" r="6"/><circle cx="3319.8" cy="1598.9" r="6"/><circle cx="609.6" cy="1638.9" r="6"/><circle cx="677.1" cy="1638.9" r="6"/><circle cx="688.4" cy="1638.9" r="6"/><circle cx="693.8" cy="1638.9" r="6"/><circle cx="705.9" cy="1638.9" r="6"/><circle cx="715.2" cy="1638.9" r="6"/><circle cx="719.4" cy="1638.9" r="6"/><circle cx="726.8" cy="1638.9" r="6"/><circle cx="729.9" cy="1638.9" r="6"/><circle cx="738.1" cy="1638.9" r="6"/><circle cx="744.3" cy="1638.9" r="6"/><circle cx="780.0" cy="1638.9" r="6"/><circle cx="886.0" cy="1638.9" r="6"/><circle cx="892.2" cy="1638.9" r="6"/><circle cx="905.4" cy="1638.9" r="6"/><circle cx="919.4" cy="1638.9" r="6"/><circle cx="957.8" cy="1638.9" r="6"/><circle cx="999.3" cy="1638.9" r="6"/><circle cx="1036.6" cy="1638.9" r="6"/><circle cx="1103.0" cy="1638.9" r="6"/><circle cx="1162.0" cy="1638.9" r="6"/><circle cx="1325.8" cy="1638.9" r="6"/><circle cx="1491.2" cy="1638.9" r="6"/><circle cx="2729.7" cy="1638.9" r="6"/><circle cx="2814.2" cy="1638.9" r="6"/><circle cx="2859.2" cy="1638.9" r="6"/><circle cx="2871.9" cy="1638.9" r="6"/><circle cx="2899.9" cy="1638.9" r="6"/><circle cx="3019.4" cy="1638.9" r="6"/><circle cx="3075.7" cy="1638.9" r="6"/><circle cx="3086.2" cy="1638.9" r="6"/><circle cx="3129.1" cy="1638.9" r="6"/><circle cx="3197.1" cy="1638.9" r="6"/><circle cx="3345.2" cy="1638.9" r="6"/><circle cx="3359.5" cy="1638.9" r="6"/><circle cx="3385.6" cy="1638.9" r="6"/><circle cx="615.8" cy="1678.9" r="6"/><circle cx="825.8" cy="1678.9" r="6"/><circle cx="928.3" cy="1678.9" r="6"/><circle cx="1030.9" cy="1678.9" r="6"/><circle cx="1137.9" cy="1678.9" r="6"/><circle cx="1348.7" cy="1678.9" r="6"/><circle cx="1450.8" cy="1678.9" r="6"/><circle cx="2718.4" cy="1678.9" r="6"/><circle cx="2825.7" cy="1678.9" r="6"/><circle cx="2931.6" cy="1678.9" r="6"/><circle cx="3034.7" cy="1678.9" r="6"/><circle cx="3244.3" cy="1678.9" r="6"/><circle cx="3353.0" cy="1678.9" r="6"/><circle cx="610.0" cy="1718.9" r="6"/><circle cx="637.9" cy="1718.9" r="6"/><circle cx="705.5" cy="1718.9" r="6"/><circle cx="766.4" cy="1718.9" r="6"/><circle cx="851.4" cy="1718.9" r="6"/><circle cx="860.8" cy="1718.9" r="6"/><circle cx="2887.1" cy="1718.9" r="6"/><circle cx="3048.3" cy="1718.9" r="6"/><circle cx="3166.0" cy="1718.9" r="6"/><circle cx="3305.8" cy="1718.9" r="6"/><circle cx="3321.0" cy="1718.9" r="6"/><circle cx="3397.7" cy="1718.9" r="6"/><circle cx="3403.3" cy="1718.9" r="6"/></g><g fill="#63b85c" opacity=".85"><circle cx="1898.0" cy="878.9" r="6"/><circle cx="2306.0" cy="878.9" r="6"/><circle cx="748.2" cy="1238.9" r="6"/></g><g fill="#cf9c3b" opacity=".85"><circle cx="1630.9" cy="958.9" r="6"/><circle cx="814.2" cy="1158.9" r="6"/><circle cx="1248.6" cy="1398.9" r="6"/><circle cx="775.7" cy="1718.9" r="6"/></g><g fill="#6cc3cc" opacity=".85"><circle cx="609.6" cy="1678.9" r="6"/><circle cx="716.7" cy="1678.9" r="6"/><circle cx="819.2" cy="1678.9" r="6"/><circle cx="923.6" cy="1678.9" r="6"/><circle cx="1027.4" cy="1678.9" r="6"/><circle cx="1130.9" cy="1678.9" r="6"/><circle cx="1238.4" cy="1678.9" r="6"/><circle cx="1342.1" cy="1678.9" r="6"/><circle cx="1446.5" cy="1678.9" r="6"/><circle cx="2819.8" cy="1678.9" r="6"/><circle cx="2925.4" cy="1678.9" r="6"/><circle cx="3029.4" cy="1678.9" r="6"/><circle cx="3135.6" cy="1678.9" r="6"/><circle cx="3238.7" cy="1678.9" r="6"/><circle cx="3345.5" cy="1678.9" r="6"/></g></svg>
</div>
</div>
<div class="abs" style="left:1519.7px;top:1015.7px;width:1196.5px;height:784.5px;border:2px solid #30363d;border-radius:13px;background:#1c2128;box-shadow:0 8px 40px 6px rgba(0,0,0,.55)">
<div class="t" style="left:24.4px;top:26.40px;font-size:24px;line-height:32px;color:#8b949e">Thread</div>
<div class="t" style="left:220.3px;top:26.40px;font-size:24px;line-height:32px;color:#e6edf3">915263 (<span style="display:inline-block;width:375.7px"></span>)</div>
<div class="t" style="left:24.4px;top:58.40px;font-size:24px;line-height:32px;color:#8b949e">Start (Prague)</div>
<div class="t" style="left:242.7px;top:58.40px;font-size:24px;line-height:32px;color:#e6edf3">23. 04. 2026 11:47:00,070</div>
<div class="t" style="left:24.4px;top:90.40px;font-size:24px;line-height:32px;color:#8b949e">Type</div>
<div class="t" style="left:220.3px;top:90.40px;font-size:24px;line-height:32px;color:#e6edf3">SELECT</div>
<div class="t" style="left:24.4px;top:122.40px;font-size:24px;line-height:32px;color:#8b949e">Duration</div>
<div class="t" style="left:220.3px;top:122.40px;font-size:24px;line-height:32px;color:#e6edf3">339.56ms</div>
<div class="t" style="left:24.4px;top:154.40px;font-size:24px;line-height:32px;color:#8b949e">Rows Examined</div>
<div class="t" style="left:228.2px;top:154.40px;font-size:24px;line-height:32px;color:#e6edf3">616669</div>
<div class="t" style="left:24.4px;top:186.40px;font-size:24px;line-height:32px;color:#8b949e">Rows Sent</div>
<div class="t" style="left:220.3px;top:186.40px;font-size:24px;line-height:32px;color:#e6edf3">89</div>
<div class="t" style="left:24.4px;top:218.40px;font-size:24px;line-height:32px;color:#8b949e">Lock Time</div>
<div class="t" style="left:220.3px;top:218.40px;font-size:24px;line-height:32px;color:#e6edf3">2.0us</div>
<div class="abs" style="left:333.9px;top:28.3px;width:380.7px;height:24.5px;background:#000"></div>
<div class="t" style="left:24.4px;top:248.90px;font-size:24px;line-height:32px;color:#8b949e">Digest</div>
<div class="t" style="left:220.3px;top:252.50px;font-size:22px;line-height:25px;color:#e6edf3">SELECT `r1_0` . `id` , `r1_0` . `access_code` , `r1_0` . `cancelled_at_<br>external_dp` , `r1_0` . `date_collected` , `r1_0` . `courier_dropoff_si<br>nce` , `r1_0` . `courier_dropoff_till` , `r1_0` . `created_at` , `r1_0`<br>. `created_at_external_dp` , `r1_0` . `customer_pick_since` , `r1_0` .<br>`customer_pick_till` , `dp1_0` . `id` , `dp1_0` . `access_time_required<br>` , `dp1_0` . `access_type` , `dp1_0` . `active` , `dp1_0` . `address_d<br>escription` , `dp1_0` . `address_id` , `dp1_0` . `courier_description`<br>, `dp1_0` . `created_at` , `dp1_0` . `customer_description` , `dp1_0` .<br>`deleted` , `dp1_0` . `expressEnabled` , `dp1_0` . `external_reference`<br>, `dp1_0` . `lat` , `dp1_0` . `location_description` , `dp1_0` . `lon`<br>, `dp1_0` . `melting_time` , `dp1_0` . `melting_warning_time` , `dp1_0`<br>. `display_name` , `dp1_0` . `nonstop` , `dp1_0` . `time_slot_template_<br>id` , `dp1_0` . `type` , `dp1_0` . `updated_at` , `r1_0` . `external_re<br>ference` , `r1_0` . `date_loaded`</div>
<div class="abs" style="left:24.4px;top:618.6px;width:1147.6px;height:106.5px;border-radius:9px;background:#0d1117"><div class="t" style="left:16.2px;top:16px;font-size:22px;line-height:25px;color:#dfe5ec">SELECT `r1_0` . `id` , `r1_0` . `access_code` , `r1_0` . `cancelled_at_external_dp`<br>, `r1_0` . `date_collected` , `r1_0` . `courier_dropoff_since` , `r1_0` .<br>`courier_dropoff_till` , `r1_0` . `created</div></div>
<div class="t" style="left:24.4px;top:736.10px;font-size:20px;line-height:26px;color:#7d8590">Click dot for full SQL</div>
</div>
<div class="t" style="left:43px;top:1780.50px;font-size:30px;line-height:38px;color:#f0f6fc;font-weight:700;">Queries</div>
<div class="t" style="left:195.5px;top:1788.80px;font-size:22px;line-height:28px;color:#f0f6fc;">▶</div>
<div class="abs" style="left:43px;top:1828.5px;width:3383px;height:2px;background:#2a2f38"></div>
</div></body></html>
